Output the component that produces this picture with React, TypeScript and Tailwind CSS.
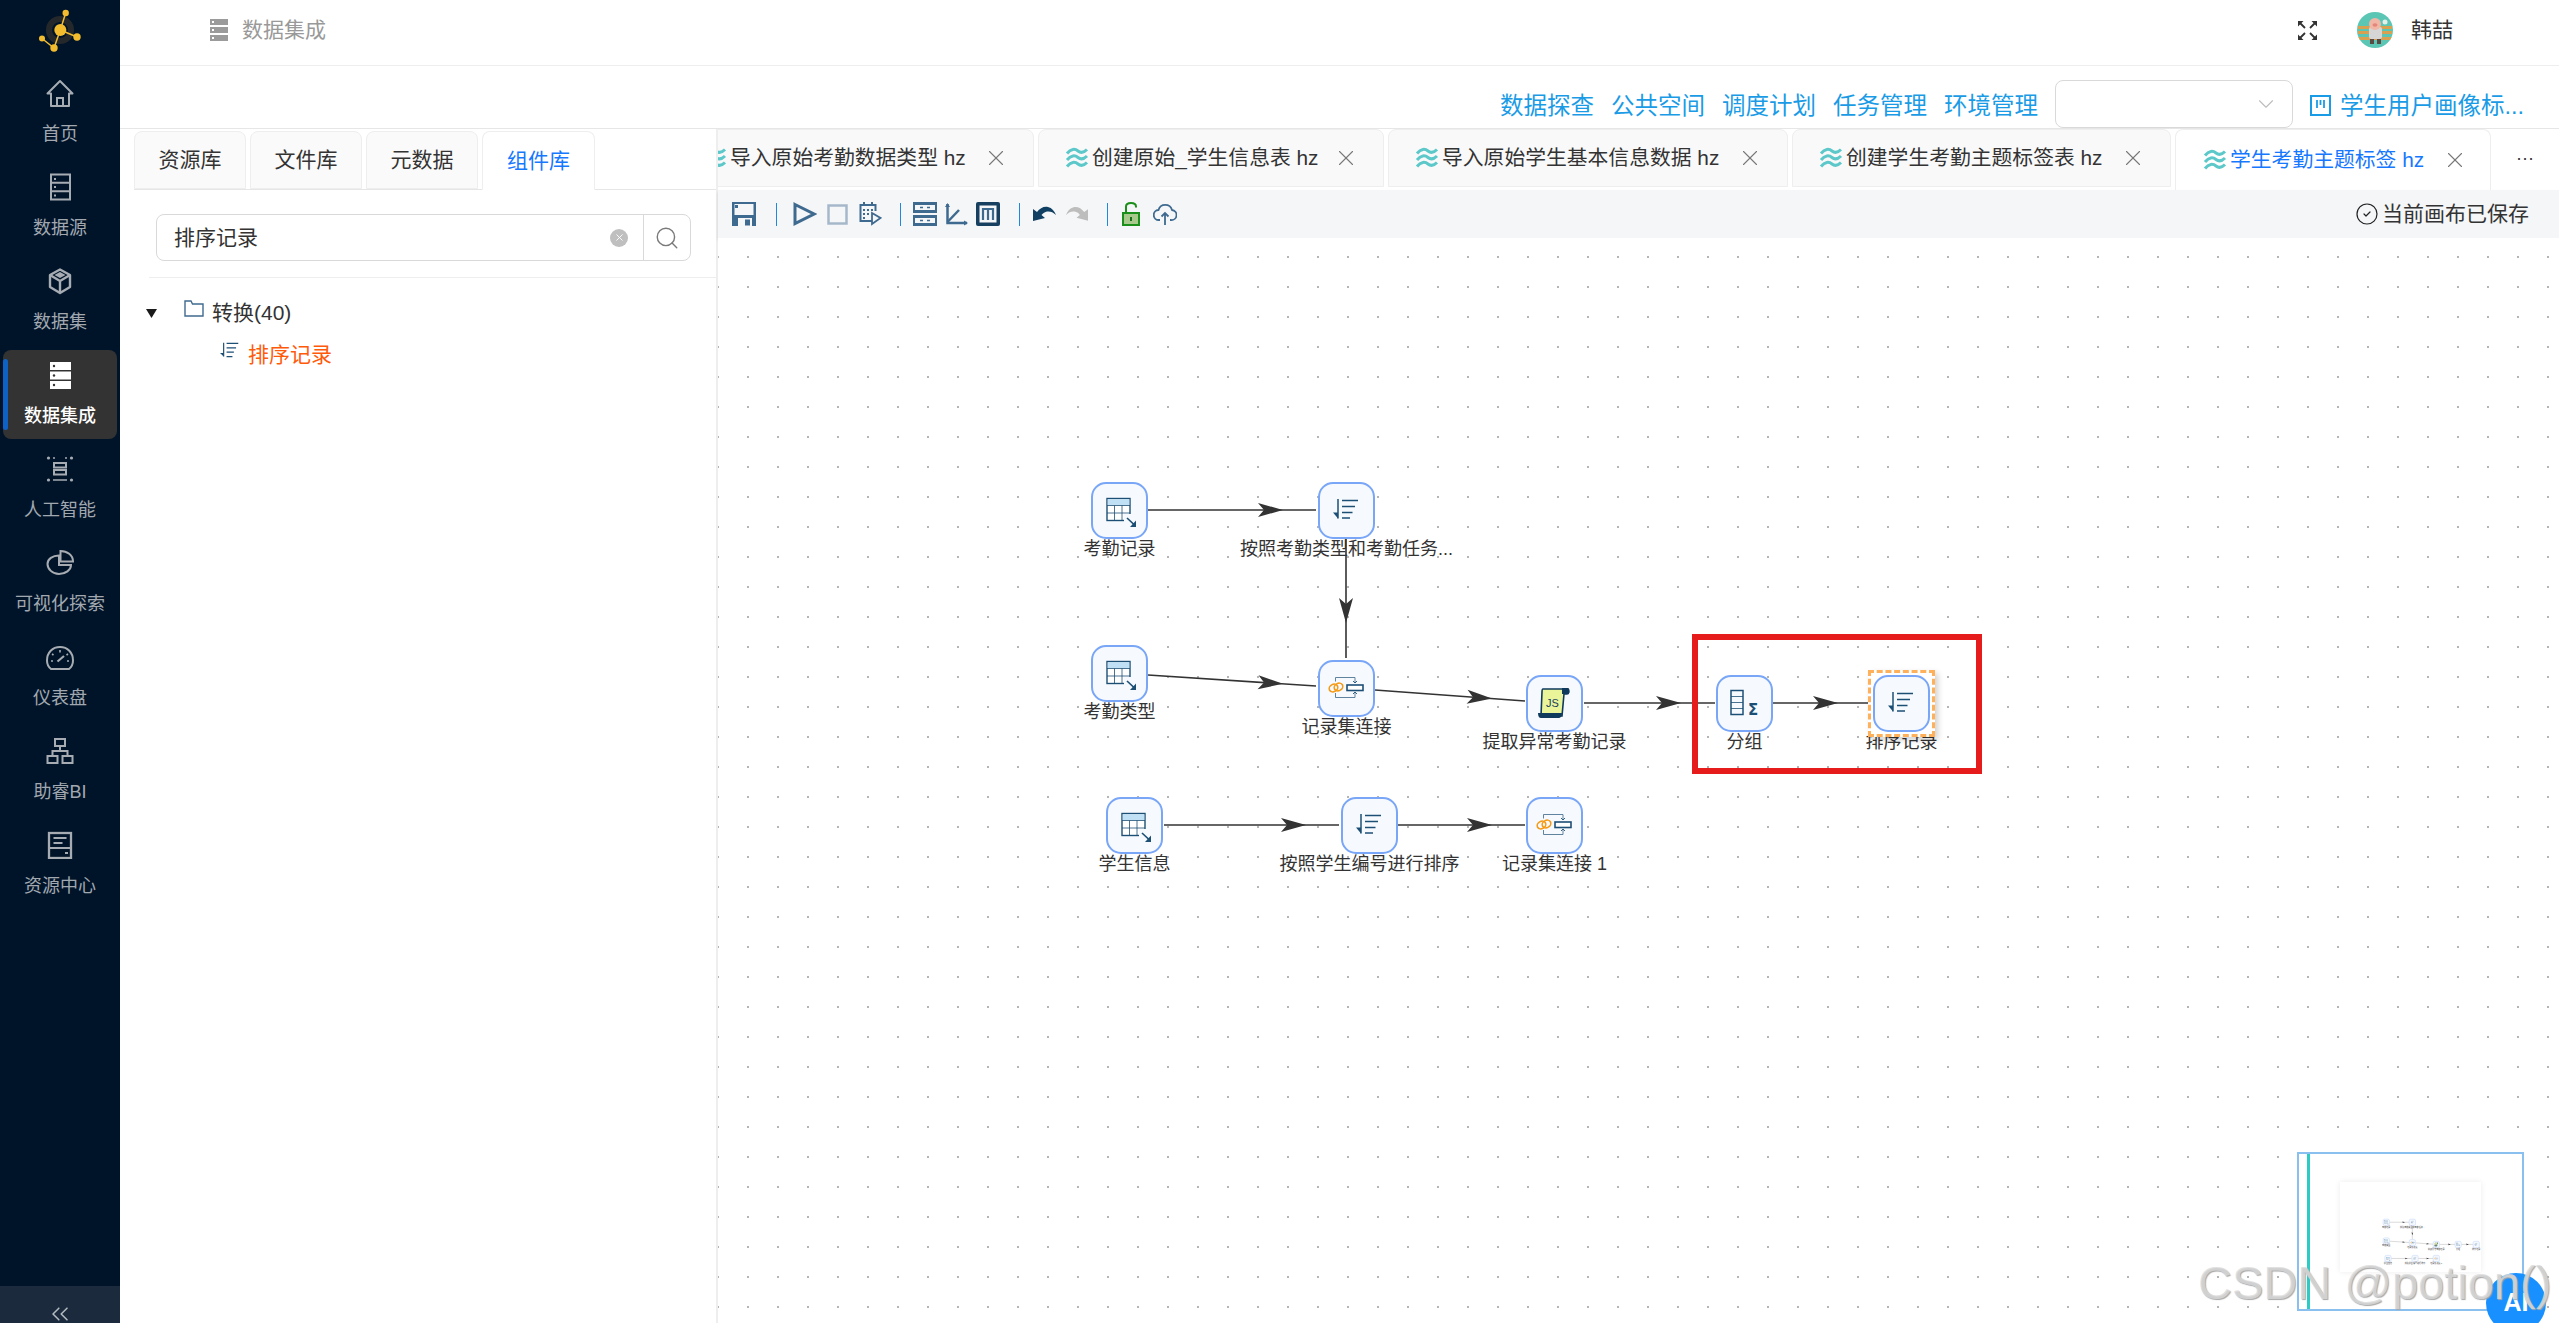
import React from "react";
import { ChevronDown, ChevronsLeft, CircleCheck, Search, X } from "lucide-react";

type NavIconKind = "home" | "source" | "dataset" | "integrate" | "ai" | "pie" | "gauge" | "bi" | "center";

function NavIcon({ kind }: { kind: NavIconKind }) {
  const c = "#a7acb3";
  const common = { fill: "none", stroke: c, strokeWidth: 2 } as const;
  return (
    <svg width="28" height="28" viewBox="0 0 28 28">
      {kind === "home" && (
        <g {...common}>
          <path d="M1.5 14.5 14 2l12.5 12.5H23V27H5V14.5Z" strokeLinejoin="round" />
          <path d="M11 27v-8h6v8" />
        </g>
      )}
      {kind === "source" && (
        <g {...common}>
          <rect x="5" y="1.5" width="19" height="25" />
          <path d="M5 9.8h19M5 18.2h19" />
          <rect x="8" y="5" width="2" height="2" fill={c} stroke="none" />
          <rect x="8" y="13" width="2" height="2" fill={c} stroke="none" />
          <rect x="8" y="21.5" width="2" height="2" fill={c} stroke="none" />
        </g>
      )}
      {kind === "dataset" && (
        <g {...common} strokeWidth="2.4" strokeLinejoin="round">
          <path d="M14 2.5 24 8v12l-10 6-10-6V8Z" />
          <path d="M4 8l10 6 10-6M14 14v12" />
          <path d="M14 5 19.500 8 14 11 8.500 8Z" fill={c} stroke="none" />
        </g>
      )}
      {kind === "integrate" && (
        <g>
          <rect x="4" y="1" width="21" height="8" fill="#fff" />
          <rect x="4" y="10.5" width="21" height="8" fill="#fff" />
          <rect x="4" y="20" width="21" height="8" fill="#fff" />
          <circle cx="8" cy="5" r="1.2" fill="#333" />
          <circle cx="8" cy="14.5" r="1.2" fill="#333" />
          <circle cx="8" cy="24" r="1.2" fill="#333" />
        </g>
      )}
      {kind === "ai" && (
        <g {...common}>
          <circle cx="2.5" cy="3" r="1.6" fill={c} stroke="none" />
          <circle cx="25.5" cy="3" r="1.6" fill={c} stroke="none" />
          <circle cx="2.5" cy="25" r="1.6" fill={c} stroke="none" />
          <circle cx="25.5" cy="25" r="1.6" fill={c} stroke="none" />
          <path d="M7 3h2M19 3h2M7 25h14" strokeWidth="1.5" />
          <rect x="8" y="8" width="12" height="4.500" />
          <rect x="8" y="15" width="12" height="4.500" />
        </g>
      )}
      {kind === "pie" && (
        <g {...common}>
          <path d="M13 6.5C6.5 6.5 1.5 10 1.5 15S6.5 25 13 25s12-4 12-9H13Z" />
          <path d="M14.5 2v10.5H27C27 6 21 2 14.5 2Z" />
        </g>
      )}
      {kind === "gauge" && (
        <g {...common}>
          <path d="M5 26C2.5 24 1 21 1 17.5 1 9.5 6.5 4 14 4s13 5.500 13 13.500C27 21 25.500 24 23 26Z" strokeLinejoin="round" />
          <path d="M14 7v2.500M6 11l1.500 1M22 11l-1.500 1M5 18h2M21 18h2" strokeWidth="1.6" />
          <path d="M11.500 18.500 18 13" strokeWidth="2.200" />
        </g>
      )}
      {kind === "bi" && (
        <g {...common}>
          <rect x="9" y="2" width="10" height="7" />
          <rect x="1.500" y="19" width="10" height="7" />
          <rect x="16.500" y="19" width="10" height="7" />
          <path d="M14 9v5M6.500 19v-5h15v5" />
        </g>
      )}
      {kind === "center" && (
        <g {...common}>
          <rect x="3" y="2" width="22" height="25" strokeWidth="2.300" />
          <path d="M3 17h22M7.500 7h13M7.500 12h9M19 22h3" strokeWidth="1.800" />
        </g>
      )}
    </svg>
  );
}

const navItems: { label: string; icon: NavIconKind; active?: boolean }[] = [
  { label: "首页", icon: "home" },
  { label: "数据源", icon: "source" },
  { label: "数据集", icon: "dataset" },
  { label: "数据集成", icon: "integrate", active: true },
  { label: "人工智能", icon: "ai" },
  { label: "可视化探索", icon: "pie" },
  { label: "仪表盘", icon: "gauge" },
  { label: "助睿BI", icon: "bi" },
  { label: "资源中心", icon: "center" },
];

function Logo() {
  return (
    <svg width="48" height="48" viewBox="0 0 48 48">
      <circle cx="24" cy="24" r="11" fill="none" stroke="#25282b" strokeWidth="6" />
      <g stroke="#f3bc2e" strokeWidth="1.500" fill="none">
        <path d="M24.300 24 29.700 7M24.300 24 41 31M24.300 24 18 42 6 32.500" />
      </g>
      <g fill="#f3bc2e">
        <circle cx="24.300" cy="24" r="6" />
        <circle cx="29.700" cy="7" r="3.200" />
        <circle cx="41" cy="31" r="3.700" />
        <circle cx="18" cy="42" r="3.700" />
        <circle cx="6" cy="32.500" r="3" />
      </g>
    </svg>
  );
}

function Sidebar() {
  return (
    <aside className="flex w-[120px] shrink-0 flex-col bg-[#001429]">
      <div className="flex h-[65px] items-center justify-center pb-[5px]">
        <Logo />
      </div>
      <nav className="flex-1">
        {navItems.map((n) =>
          n.active ? (
            <div key={n.label} className="relative mx-[3px] mt-[3px] mb-[2px] flex h-[89px] flex-col items-center justify-center gap-[15px] rounded-lg bg-[#333333]">
              <div className="absolute top-[9px] left-0 h-[71px] w-[5px] rounded-sm bg-[#0f62c5]" />
              <NavIcon kind={n.icon} />
              <span className="text-[18px] leading-[24px] font-medium text-white">{n.label}</span>
            </div>
          ) : (
            <div key={n.label} className="flex h-[94px] flex-col items-center justify-center gap-[15px]">
              <NavIcon kind={n.icon} />
              <span className="text-[18px] leading-[24px] text-[#a2a8b0]">{n.label}</span>
            </div>
          )
        )}
      </nav>
      <div className="flex h-[37px] items-start justify-center bg-[#1b2b3d] pt-[14px]">
        <ChevronsLeft size={28} strokeWidth={1.3} color="#b4bac1" />
      </div>
    </aside>
  );
}

function Avatar() {
  return (
    <svg width="36" height="36" viewBox="0 0 36 36">
      <clipPath id="av">
        <circle cx="18" cy="18" r="18" />
      </clipPath>
      <g clipPath="url(#av)">
        <rect width="36" height="36" fill="#5cc6b4" />
        <rect x="1" y="14" width="34" height="3" fill="#d9a050" />
        <rect x="1" y="19" width="34" height="3" fill="#d9a050" />
        <rect x="1" y="25" width="34" height="3" fill="#d9a050" />
        <rect x="12" y="15" width="13" height="12" rx="2" fill="#d6d6d6" />
        <circle cx="18" cy="12" r="6" fill="#f1b6a6" />
        <ellipse cx="18" cy="13" rx="2.500" ry="1.700" fill="#e2877a" />
        <rect x="13" y="27" width="4" height="5" fill="#5a4a44" />
        <rect x="20" y="27" width="4" height="5" fill="#5a4a44" />
        <circle cx="28" cy="10" r="2.500" fill="#e6eee8" />
      </g>
    </svg>
  );
}

function TopHeader() {
  return (
    <header className="flex h-[66px] shrink-0 items-center border-b border-[#eeeeee] pr-[106px] pb-[5px] pl-[90px]">
      <svg width="18" height="22" viewBox="0 0 18 22">
        <rect width="18" height="6" fill="#9b9b9b" />
        <rect y="8" width="18" height="6" fill="#9b9b9b" />
        <rect y="16" width="18" height="6" fill="#9b9b9b" />
        <rect x="2" y="2" width="2" height="2" fill="#fff" />
        <rect x="2" y="10" width="2" height="2" fill="#fff" />
        <rect x="2" y="18" width="2" height="2" fill="#fff" />
      </svg>
      <span className="ml-[14px] text-[21px] text-[#999999]">数据集成</span>
      <div className="ml-auto flex items-center">
        <svg width="21" height="21" viewBox="0 0 21 21" fill="none" stroke="#333">
          <path d="M2.500 2.500 8 8M18.500 2.500 13 8M2.500 18.500 8 13M18.500 18.500 13 13" strokeWidth="1.800" />
          <path d="M1 1h5.500L1 6.500ZM20 1v5.500L14.500 1ZM1 20v-5.500L6.500 20ZM20 20h-5.500l5.500-5.500Z" fill="#333" stroke="none" />
        </svg>
        <span className="ml-[39px] flex"><Avatar /></span>
        <span className="ml-[18px] text-[21px] text-[#333333]">韩喆</span>
      </div>
    </header>
  );
}

function ActionRow() {
  const links = ["数据探查", "公共空间", "调度计划", "任务管理", "环境管理"];
  return (
    <div className="flex h-[63px] shrink-0 items-center justify-end border-b border-[#e6e6e6] pt-[13px] pr-[35px] text-[23.5px] text-[#1a9be6]">
      <div className="flex gap-[17px] pt-[6px]">
        {links.map((l) => (
          <span key={l}>{l}</span>
        ))}
      </div>
      <div className="ml-[17px] flex h-[48px] w-[238px] items-center justify-end rounded-lg border border-[#d9d9d9] pr-[13px]">
        <ChevronDown size={26} strokeWidth={1} color="#bdbdbd" />
      </div>
      <svg className="ml-[17px] mt-[4px]" width="21" height="21" viewBox="0 0 21 21" fill="none" stroke="#1a9be6" strokeWidth="2">
        <rect x="1" y="1" width="19" height="19" />
        <path d="M7 5v8M14 5v8M10.500 5v5" strokeWidth="1.800" />
      </svg>
      <span className="ml-[9px] pt-[6px]">学生用户画像标...</span>
    </div>
  );
}

function LeftPanel() {
  const tabs = ["资源库", "文件库", "元数据", "组件库"];
  return (
    <section className="flex w-[596px] shrink-0 flex-col pt-[2px]">
      <div className="ml-[14px] flex h-[59px] gap-[4px] border-b border-[#e6e6e6]">
        {tabs.map((t, i) =>
          i === 3 ? (
            <div key={t} className="z-10 flex h-[59px] w-[113px] items-center justify-center rounded-t-lg border border-[#eeeeee] border-b-white bg-white text-[21px] text-[#1677ff]">{t}</div>
          ) : (
            <div key={t} className="flex h-[58px] w-[112px] items-center justify-center rounded-t-lg border border-[#eeeeee] bg-[#fafafa] text-[21px] text-[#333333]">{t}</div>
          )
        )}
      </div>
      <div className="mt-[24px] ml-[36px] flex h-[47px] w-[535px] rounded-lg border border-[#d9d9d9]">
        <div className="flex flex-1 items-center pr-[15px] pl-[17px]">
          <span className="flex-1 text-[21px] text-[#333333]">排序记录</span>
          <span className="flex h-[18px] w-[18px] items-center justify-center rounded-full bg-[#bfbfbf]">
            <X size={11} color="#fff" strokeWidth={2} />
          </span>
        </div>
        <div className="flex w-[47px] items-center justify-center border-l border-[#d9d9d9]">
          <Search size={26} strokeWidth={1.3} color="#7a7a7a" />
        </div>
      </div>
      <div className="mt-[16px] ml-[29px] h-px bg-[#eeeeee]" />
      <div className="mt-[21px] flex h-[28px] items-center">
        <svg className="ml-[26px]" width="11" height="9" viewBox="0 0 11 9">
          <path d="M0 0h11L5.500 9Z" fill="#1a1a1a" />
        </svg>
        <svg className="mb-[10px] ml-[27px]" width="20" height="17" viewBox="0 0 20 17" fill="none" stroke="#3f6a8f" strokeWidth="1.400">
          <path d="M1 16V1h6l1.500 3H19v12Z" />
        </svg>
        <span className="ml-[8px] text-[21px] text-[#333333]">转换(40)</span>
      </div>
      <div className="mt-[14px] flex h-[28px] items-center">
        <svg className="mb-[10px] ml-[100px]" width="19" height="16" viewBox="15 17 26 20" fill="none" stroke="#1d4f75" strokeWidth="1.600">
          <path d="M24 18h16M24 24h13M24 30h10M24 36h8M20 17v19" />
          <path d="M15 31h5v5Z" fill="#1d4f75" stroke="none" />
        </svg>
        <span className="ml-[9px] text-[21px] text-[#ff5a0a]">排序记录</span>
      </div>
    </section>
  );
}

function Waves() {
  return (
    <svg className="shrink-0" width="24" height="22" viewBox="0 0 24 22" fill="none" stroke="#5cc8c9" strokeWidth="3">
      <path d="M2 6.500C6 1.500 10 1.500 13 4s6 1.500 9-1.500" />
      <path d="M2 13C6 8 10 8 13 10.500S19 12 22 9" />
      <path d="M2 19.500C6 14.500 10 14.500 13 17s6 1.500 9-1.500" />
    </svg>
  );
}

const fileTabs = [
  { t: "导入原始考勤数据类型 hz", w: "ml-[-42px] w-[358px]" },
  { t: "创建原始_学生信息表 hz", w: "w-[346px]" },
  { t: "导入原始学生基本信息数据 hz", w: "w-[400px]" },
  { t: "创建学生考勤主题标签表 hz", w: "w-[379px]" },
];

function FileTabs() {
  return (
    <div className="flex h-[61px] shrink-0 items-start gap-[4px] overflow-hidden">
      {fileTabs.map((f) => (
        <div key={f.t} className={`flex h-[58px] shrink-0 items-center rounded-t-lg border border-[#eeeeee] bg-[#f9f9fa] pr-[24px] pl-[26px] text-[20.8px] whitespace-nowrap text-[#333333] ${f.w}`}>
          <Waves />
          <span className="ml-[3px] flex-1">{f.t}</span>
          <X size={26} strokeWidth={1} color="#777" />
        </div>
      ))}
      <div className="flex h-[61px] w-[316px] shrink-0 items-center rounded-t-lg border border-b-0 border-[#eeeeee] bg-white pr-[22px] pl-[27px] text-[20.8px] whitespace-nowrap text-[#1677ff]">
        <Waves />
        <span className="ml-[3px] flex-1">学生考勤主题标签 hz</span>
        <X size={26} strokeWidth={1} color="#777" />
      </div>
      <div className="ml-[-4px] flex h-[58px] flex-1 items-center justify-center text-[18px] text-[#333333]">···</div>
    </div>
  );
}

function Sep({ cls }: { cls: string }) {
  return <div className={`h-[23px] w-px bg-[#1f87e0] ${cls}`} />;
}

function Toolbar() {
  const d = "#3f6a8f";
  return (
    <div className="flex h-[48px] shrink-0 items-center bg-[#f5f6f8] pr-[30px] shadow-[0_2px_3px_rgba(0,0,0,0.12)]">
      <svg className="ml-[14px]" width="24" height="24" viewBox="0 0 24 24">
        <path d="M0 0h24v24H0Z" fill={d} />
        <rect x="2.500" y="2" width="19" height="11" fill="#f5f6f8" />
        <rect x="3" y="3" width="3" height="3" fill={d} />
        <rect x="6" y="16" width="14" height="8" fill="#f5f6f8" />
        <rect x="13" y="17.500" width="5" height="6" fill={d} />
      </svg>
      <Sep cls="ml-[20px]" />
      <svg className="ml-[16px]" width="24" height="24" viewBox="0 0 24 24" fill="none" stroke={d} strokeWidth="3">
        <path d="M2 2.500 21 12 2 21.500Z" />
      </svg>
      <svg className="ml-[10px]" width="21" height="21" viewBox="0 0 21 21" fill="none" stroke="#a5b8ca" strokeWidth="2.500">
        <rect x="1.500" y="1.500" width="18" height="18" />
      </svg>
      <svg className="ml-[11px]" width="23" height="24" viewBox="0 0 23 24" fill="none" stroke={d} strokeWidth="2">
        <path d="M13 19H1.500V3h15v6M5 0v4M13 0v4" />
        <path d="M4 8h2M8 8h2M12 8h2M4 12h2M8 12h2M4 16h2" />
        <path d="M13 11l8.500 5-8.500 6Z" strokeWidth="1.800" />
      </svg>
      <Sep cls="ml-[18px]" />
      <svg className="ml-[12px]" width="24" height="24" viewBox="0 0 24 24">
        <rect y="0" width="24" height="11" fill={d} />
        <rect y="13" width="24" height="11" fill={d} />
        <rect x="2" y="3" width="20" height="5" fill="#f5f6f8" />
        <rect x="2" y="16" width="20" height="5" fill="#f5f6f8" />
        <path d="M7 5.500h3M14 5.500h3M7 18.500h3M14 18.500h3" stroke={d} strokeWidth="1.500" />
      </svg>
      <svg className="ml-[7px]" width="24" height="24" viewBox="0 0 24 24" fill="none" stroke={d}>
        <path d="M3.500 2v19H23" strokeWidth="2.500" />
        <path d="M3.500 20 15 8" strokeWidth="2.500" />
        <path d="M1 5l2.500-4L6 5ZM20 18.500l4 2.500-4 2.500Z" fill={d} stroke="none" />
      </svg>
      <svg className="ml-[8px]" width="24" height="24" viewBox="0 0 24 24">
        <rect width="24" height="24" rx="2" fill="#173f60" />
        <rect x="3.500" y="3.500" width="17" height="17" fill="#f5f6f8" />
        <path d="M7 18V7h10v11M12 7v11" fill="none" stroke="#3f6a8f" strokeWidth="2.200" />
      </svg>
      <Sep cls="ml-[19px]" />
      <svg className="ml-[13px]" width="23" height="16" viewBox="0 0 23 16">
        <path d="M0 15V3l4 3C7 2 11 0 15 1c4 1 6.500 4 8 8-3-3-6-4-9-3.500-2 .4-4 1.500-5.500 3.500L12 12Z" fill="#0f3f62" />
      </svg>
      <svg className="ml-[10px]" width="22" height="16" viewBox="0 0 23 16">
        <path d="M23 15V3l-4 3C16 2 12 0 8 1 4 2 1.500 5 0 9c3-3 6-4 9-3.500 2 .4 4 1.500 5.500 3.500L11 12Z" fill="#bdbdbd" />
      </svg>
      <Sep cls="ml-[19px]" />
      <svg className="ml-[14px]" width="18" height="24" viewBox="0 0 18 24" fill="none">
        <path d="M4 11V4.500C4 2.500 6 1 9 1s5 1.500 5 3.500v1" stroke="#1a8f1a" strokeWidth="2" />
        <rect x="1" y="11" width="16" height="12" fill="#a8c98c" stroke="#1a8f1a" strokeWidth="2" />
        <rect x="8" y="15" width="2" height="4" fill="#1a6f1a" />
      </svg>
      <svg className="ml-[13px]" width="24" height="22" viewBox="0 0 24 22" fill="none" stroke="#3f6a8f" strokeWidth="1.800">
        <path d="M7 17H6A5 5 0 0 1 5.500 7 7 7 0 0 1 19 7a5 5 0 0 1-1 10h-1" />
        <path d="M12 22V10M8.500 13.500 12 10l3.500 3.500" />
      </svg>
      <div className="ml-auto flex items-center gap-[3px] text-[21px] text-[#333333]">
        <CircleCheck size={24} strokeWidth={1.2} color="#222" />
        <span>当前画布已保存</span>
      </div>
    </div>
  );
}

type NodeKind = "table" | "sort" | "join" | "js" | "group";
type FlowNode = { x: number; y: number; kind: NodeKind; label: string; selected?: boolean };

const nodes: FlowNode[] = [
  { x: 1091, y: 482, kind: "table", label: "考勤记录" },
  { x: 1318, y: 482, kind: "sort", label: "按照考勤类型和考勤任务..." },
  { x: 1091, y: 645, kind: "table", label: "考勤类型" },
  { x: 1318, y: 660, kind: "join", label: "记录集连接" },
  { x: 1526, y: 675, kind: "js", label: "提取异常考勤记录" },
  { x: 1716, y: 675, kind: "group", label: "分组" },
  { x: 1873, y: 675, kind: "sort", label: "排序记录", selected: true },
  { x: 1106, y: 797, kind: "table", label: "学生信息" },
  { x: 1341, y: 797, kind: "sort", label: "按照学生编号进行排序" },
  { x: 1526, y: 797, kind: "join", label: "记录集连接 1" },
];

const edges: [number, number, number, number, number][] = [
  [1148, 510, 1316, 510, 1283],
  [1346, 538, 1346, 658, 623],
  [1148, 675, 1316, 686, 1283],
  [1375, 690, 1525, 701, 1492],
  [1584, 703, 1715, 703, 1681],
  [1773, 703, 1871, 703, 1838],
  [1164, 825, 1339, 825, 1306],
  [1398, 825, 1525, 825, 1492],
];

function Edge({ e }: { e: [number, number, number, number, number] }) {
  const [x1, y1, x2, y2, tip] = e;
  const len = Math.hypot(x2 - x1, y2 - y1);
  const dx = (x2 - x1) / len;
  const dy = (y2 - y1) / len;
  const vertical = x1 === x2;
  const t = vertical ? (tip - y1) / dy : (tip - x1) / dx;
  const tx = x1 + dx * t;
  const ty = y1 + dy * t;
  const pt = (back: number, side: number) => `${tx - dx * back - dy * side},${ty - dy * back + dx * side}`;
  return (
    <g>
      <line x1={x1} y1={y1} x2={x2} y2={y2} stroke="#333" strokeWidth="1.600" />
      <polygon points={`${tx},${ty} ${pt(25, 7)} ${pt(19, 0)} ${pt(25, -7)}`} fill="#333" />
    </g>
  );
}

function NodeIcon({ kind }: { kind: NodeKind }) {
  const dark = "#1d4f75";
  if (kind === "table")
    return (
      <g>
        <rect x="16" y="16.500" width="23" height="22" fill="#fff" stroke={dark} strokeWidth="1.400" />
        <rect x="16.700" y="17.200" width="21.600" height="6" fill="#bfe0f5" />
        <path d="M16 23.500h23M16 31h23M23.500 23.500v15M31 23.500v15" stroke={dark} strokeWidth="0.800" fill="none" />
        <rect x="33" y="32" width="13" height="14" fill="#f6faff" />
        <path d="M36 36l7 6.500" stroke={dark} strokeWidth="1.700" />
        <path d="M45 45v-6.500l-6 6.500Z" fill={dark} />
      </g>
    );
  if (kind === "sort")
    return (
      <g fill="none" stroke={dark} strokeWidth="1.300">
        <path d="M24 18.500h16M24 24.500h13M24 30.500h10.500M24 36h8" />
        <path d="M20 17v19.500" strokeWidth="1.500" />
        <path d="M15 30.500h5v6Z" fill={dark} stroke="none" />
      </g>
    );
  if (kind === "join")
    return (
      <g fill="none">
        <ellipse cx="15.500" cy="28" rx="4.500" ry="3.600" stroke="#f59a14" strokeWidth="1.600" transform="rotate(-30 15.500 28)" />
        <ellipse cx="20.500" cy="27" rx="4.500" ry="3.600" stroke="#f59a14" strokeWidth="1.600" transform="rotate(-30 20.500 27)" />
        <rect x="29" y="25" width="16" height="5.500" fill="#fff" stroke={dark} strokeWidth="1.600" />
        <path d="M17.500 21.500V17.500H37v5M17.500 33v4.500H37v-5" stroke="#4f7594" strokeWidth="0.900" />
        <path d="M35 21l2 2 2-2M35 34l2-2 2 2" stroke={dark} strokeWidth="0.900" />
      </g>
    );
  if (kind === "js")
    return (
      <g>
        <path d="M17 14h23l2 1c1 1 1 4-1 4h-3l-2 22H15l1-24c0-2 0-3 1-3Z" fill="#eaf59a" stroke="#0f3a5c" strokeWidth="1.600" />
        <path d="M36 13h6c2 0 2 6 0 6h-6Z" fill="#0f3a5c" />
        <path d="M12 38h24c0 3-1 5-4 5H15c-2 0-3-2-3-5Z" fill="#0f3a5c" />
        <text x="20" y="32" fontSize="11" fill="#173f60" fontFamily="Liberation Sans, sans-serif">JS</text>
      </g>
    );
  return (
    <g>
      <rect x="15" y="15.500" width="12" height="24" fill="#f6faff" stroke={dark} strokeWidth="1.500" />
      <path d="M15 21.500h12M15 27.500h12M15 33.500h12" stroke={dark} strokeWidth="0.800" />
      <text x="32" y="40" fontSize="15" fontWeight="700" fill={dark} fontFamily="DejaVu Sans, sans-serif">Σ</text>
    </g>
  );
}

function Canvas() {
  return (
    <div className="relative flex-1 overflow-hidden bg-white bg-[radial-gradient(circle,#b5b5b5_1px,transparent_1.4px)] bg-[length:30px_30px] bg-[position:-15px_4px]">
      <svg className="absolute top-0 left-0" width="1841" height="1085" viewBox="718 238 1841 1085">
        {edges.map((e, i) => (
          <Edge key={i} e={e} />
        ))}
      </svg>
      {nodes.map((n) => (
        <div key={n.label} className="absolute flex w-[57px] flex-col items-center" style={{ left: n.x - 718, top: n.y - 238 }}>
          <div className="relative z-10 h-[57px] w-[57px] rounded-[15px] border-2 border-[#79a6f6] bg-[#f6faff]">
            <svg className="absolute top-[-2px] left-[-2px]" width="57" height="57" viewBox="0 0 57 57">
              <NodeIcon kind={n.kind} />
            </svg>
          </div>
          <span className="text-[18px] leading-[20px] whitespace-nowrap text-[#333333]">{n.label}</span>
          {n.selected && (
            <div className="absolute top-[-5px] left-[-5px] h-[67px] w-[67px] border-[3px] border-dashed border-[#ffb05a] bg-white shadow-[3px_3px_6px_rgba(0,0,0,0.18)]" />
          )}
        </div>
      ))}
      <div className="absolute top-[396px] left-[974px] h-[140px] w-[290px] border-[6px] border-[#e61c1c]" />
      <Minimap />
      <div className="absolute top-[1035px] left-[1768px] flex h-[60px] w-[60px] items-center justify-center rounded-full bg-[#1890ff] text-[25px] font-bold text-white">AI</div>
    </div>
  );
}

function Minimap() {
  const s = 0.115;
  return (
    <div className="absolute top-[914px] left-[1579px] h-[159px] w-[227px] border-2 border-[#8ac0f0] bg-white">
      <div className="absolute top-0 left-[8px] h-full w-[3px] bg-[#2ccbc5]" />
      <div className="absolute top-[28px] left-[41px] h-[90px] w-[141px] overflow-hidden bg-white shadow-[0_0_6px_rgba(0,0,0,0.08)]">
        <svg width="141" height="90" viewBox="0 0 141 90">
          <g transform={`translate(43 37) scale(${s}) translate(-1091 -482)`}>
            {edges.map((e, i) => (
              <Edge key={i} e={e} />
            ))}
            {nodes.map((n) => (
              <g key={n.label} transform={`translate(${n.x} ${n.y})`}>
                <rect x="1" y="1" width="55" height="55" rx="14" fill="#f6faff" stroke="#79a6f6" strokeWidth="2" />
                <NodeIcon kind={n.kind} />
                <text x="28" y="74" textAnchor="middle" fontSize="18" fill="#333">{n.label}</text>
              </g>
            ))}
          </g>
        </svg>
      </div>
    </div>
  );
}

export default function App() {
  return (
    <div className="relative flex h-[1323px] w-[2559px] overflow-hidden bg-white font-['Liberation_Sans','Noto_Sans_CJK_SC',sans-serif]">
      <Sidebar />
      <main className="flex min-w-0 flex-1 flex-col">
        <TopHeader />
        <ActionRow />
        <div className="flex min-h-0 flex-1">
          <LeftPanel />
          <div className="flex min-w-0 flex-1 flex-col border-l-2 border-[#eeeeee]">
            <FileTabs />
            <Toolbar />
            <Canvas />
          </div>
        </div>
      </main>
      <div className="absolute top-[1253px] left-[2198px] text-[47px] leading-[60px] whitespace-nowrap text-[#dcdcdccc] [text-shadow:1px_1px_1px_#a8a8a8]">CSDN @potion()</div>
    </div>
  );
}
